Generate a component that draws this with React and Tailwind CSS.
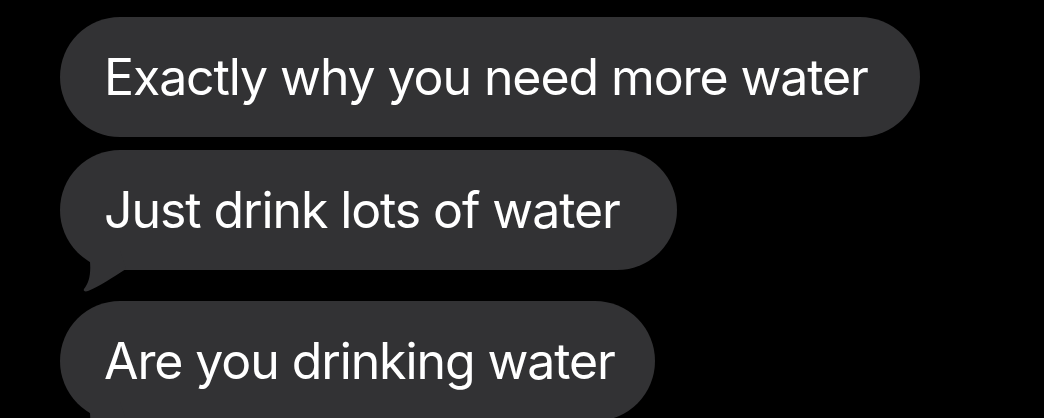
import React from 'react';

function Tail() {
	return (
		<svg className="absolute left-0 top-0" width="80" height="150" viewBox="0 0 80 150">
			<path
				d="M20 100 L30 112 C31 124 29 133 24 139 C23 141 25 142 28 141 C40 136 52 128 66 119 L60 100 Z"
				fill="#323234"
			/>
		</svg>
	);
}

function Bubble({ text, width, tail }) {
	return (
		<div
			className={`relative h-[120px] shrink-0 rounded-full bg-[#323234] flex items-center pl-[44px] ${width}`}
		>
			{tail && <Tail />}
			<span className="relative text-[50px] leading-none text-white whitespace-nowrap tracking-[-1.1px]">
				{text}
			</span>
		</div>
	);
}

function App() {
	return (
		<div
			className="w-[1044px] h-[418px] overflow-hidden bg-black pt-[17px] pl-[60px] flex flex-col items-start"
			style={{ fontFamily: 'Inter, "Noto Sans", sans-serif' }}
		>
			<Bubble text="Exactly why you need more water" width="w-[860px]" />
			<div className="mt-[13px]">
				<Bubble text="Just drink lots of water" width="w-[617px]" tail />
			</div>
			<div className="mt-[31px]">
				<Bubble text="Are you drinking water" width="w-[595px]" tail />
			</div>
		</div>
	);
}

export default App;
